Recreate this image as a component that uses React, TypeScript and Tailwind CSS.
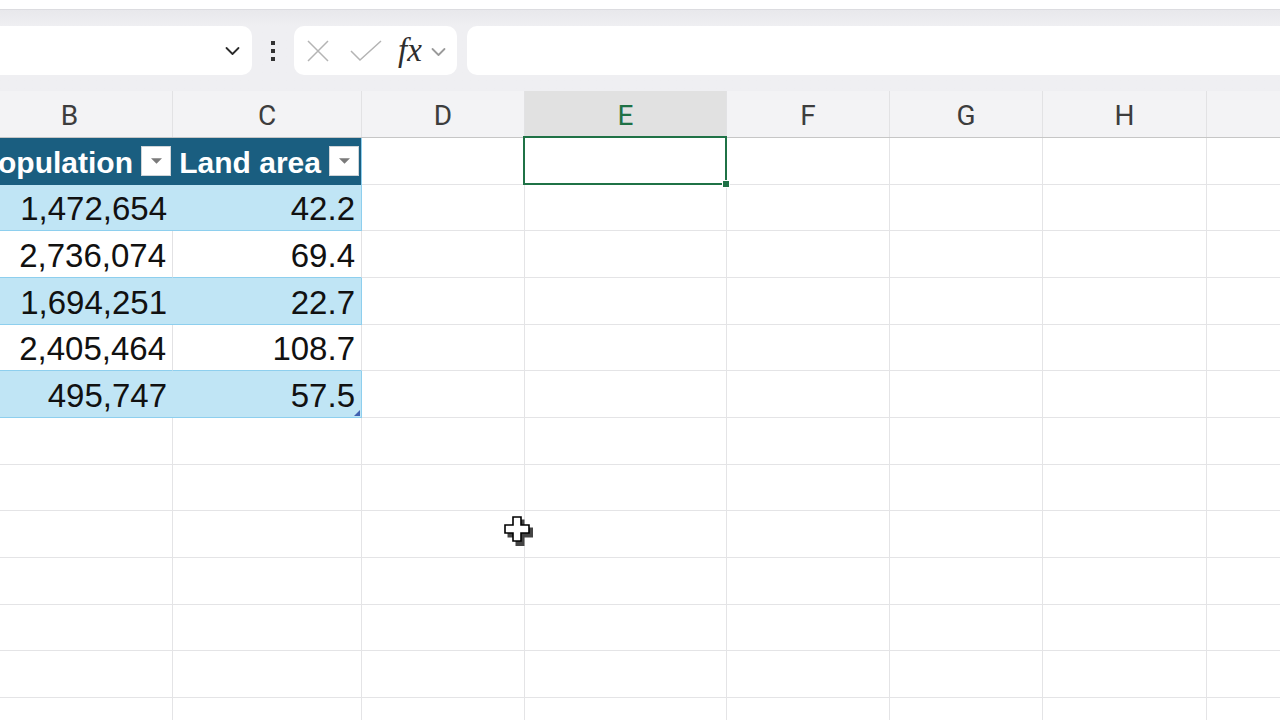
import React from 'react'

const cols = ['B', 'C', 'D', 'E', 'F', 'G', 'H', 'I']
const widths = ['w-[206px]', 'w-[189px]', 'w-[163px]', 'w-[202px]', 'w-[163px]', 'w-[153px]', 'w-[164px]', 'w-[120px]']

const data = [
  ['1,472,654', '42.2'],
  ['2,736,074', '69.4'],
  ['1,694,251', '22.7'],
  ['2,405,464', '108.7'],
  ['495,747', '57.5'],
]

function Chevron({ className }: { className: string }) {
  return (
    <svg viewBox="0 0 16 10" className={className} fill="none" stroke="currentColor" strokeWidth="1.8" strokeLinecap="round" strokeLinejoin="round">
      <path d="M2 2l6 6 6-6" />
    </svg>
  )
}

function FilterButton() {
  return (
    <div className="flex h-[30px] w-[30px] shrink-0 items-center justify-center border border-[#cfd4d8] bg-white">
      <svg viewBox="0 0 12 6" className="h-[6px] w-[11px]">
        <path d="M0 0h12L6 6z" fill="#7a7a7a" />
      </svg>
    </div>
  )
}

function Cursor() {
  return (
    <svg viewBox="0 0 30 31" className="absolute left-[503px] top-[515px] z-20 h-[31px] w-[30px]">
      <path d="M11 3h9v8h9v10h-9v9h-9v-9H3V11h8z" fill="#444" transform="translate(1.5 1.5)" />
      <path d="M10 2h8v8h8v8h-8v8h-8v-8H2v-8h8z" fill="#fff" stroke="#000" strokeWidth="1.6" />
    </svg>
  )
}

export default function App() {
  const rows = Array.from({ length: 13 })

  return (
    <div className="relative h-[720px] w-[1280px] overflow-hidden bg-white font-['Liberation_Sans',Arial,sans-serif]">
      {/* top strip */}
      <div className="h-[9px] bg-white" />

      {/* formula toolbar */}
      <div className="flex h-[82px] items-center border-t border-[#dcdce0] bg-gradient-to-b from-[#e8e8ec] from-[0%] to-[#efeff2] to-[20%]">
        <div className="flex h-[49px] w-[252px] shrink-0 items-center justify-end rounded-r-[10px] bg-white pr-[11px]">
          <Chevron className="h-[10px] w-[17px] text-[#2b2b2b]" />
        </div>
        <div className="flex w-[42px] shrink-0 flex-col items-center gap-[4px]">
          <div className="h-[4px] w-[4px] bg-[#333]" />
          <div className="h-[4px] w-[4px] bg-[#333]" />
          <div className="h-[4px] w-[4px] bg-[#333]" />
        </div>
        <div className="flex h-[49px] w-[163px] shrink-0 items-center rounded-[10px] bg-white pl-[12px]">
          <svg viewBox="0 0 24 24" className="h-[24px] w-[24px]" fill="none" stroke="#b4b4b4" strokeWidth="1.5">
            <path d="M2 2l20 20M22 2L2 22" />
          </svg>
          <svg viewBox="0 0 32 24" className="ml-[20px] h-[24px] w-[32px]" fill="none" stroke="#b4b4b4" strokeWidth="1.5">
            <path d="M1 12l9 9L31 2" />
          </svg>
          <span className="ml-[16px] font-['Liberation_Serif',serif] text-[33px] italic leading-none text-[#2e2e2e]">fx</span>
          <Chevron className="ml-[8px] mt-[2px] h-[10px] w-[17px] text-[#9a9a9a]" />
        </div>
        <div className="ml-[10px] h-[49px] flex-1 rounded-l-[10px] bg-white" />
      </div>

      {/* column headers */}
      <div className="-ml-[33px] flex h-[47px] border-b border-[#c6c6c6] bg-[#f3f3f5] font-['Roboto',sans-serif] text-[28px] text-[#3d3d3d]">
        {cols.map((c, i) => (
          <div
            key={c}
            className={`${widths[i]} flex shrink-0 items-center justify-center border-r border-[#e2e2e4] pt-[3px] ${
              c === 'E' ? 'bg-[#e1e1e1] text-[#1e7145]' : ''
            }`}
          >
            {c === 'I' ? '' : c}
          </div>
        ))}
      </div>

      {/* grid rows */}
      <div className="-ml-[33px]">
        {rows.map((_, r) => (
          <div key={r} className="flex h-[46.67px]">
            {cols.map((c, i) => {
              const inTable = r <= 5 && i <= 1
              if (inTable && r === 0) {
                return (
                  <div
                    key={c}
                    className={`${widths[i]} flex shrink-0 items-center justify-end gap-[8px] bg-[#1a5e80] pr-[2px] text-[30px] font-bold text-white ${
                      i === 1 ? 'border-r border-[#8ecfee]' : ''
                    }`}
                  >
                    <span className="whitespace-nowrap pt-[3px]">{i === 0 ? 'Population' : 'Land area'}</span>
                    <FilterButton />
                  </div>
                )
              }
              if (inTable) {
                const band = r % 2 === 1
                return (
                  <div
                    key={c}
                    className={`${widths[i]} relative flex shrink-0 items-center justify-end border-b border-[#8ecfee] pr-[6px] pt-[3px] text-[33px] text-[#111] ${
                      band ? 'bg-[#c0e5f5]' : 'border-r border-r-[#e2e2e4] bg-white'
                    } ${i === 1 ? 'border-r border-r-[#8ecfee]' : ''}`}
                  >
                    {data[r - 1][i]}
                    {r === 5 && i === 1 && (
                      <svg viewBox="0 0 6 6" className="absolute bottom-[1px] right-[1px] h-[6px] w-[6px]">
                        <path d="M6 0v6H0z" fill="#4060b0" />
                      </svg>
                    )}
                  </div>
                )
              }
              return (
                <div key={c} className={`${widths[i]} relative shrink-0 border-r border-b border-[#e4e4e6]`}>
                  {r === 0 && c === 'E' && (
                    <div className="absolute -left-[2px] -top-[2px] right-[-1px] -bottom-[1px] z-10 border-2 border-[#1f7246]">
                      <div className="absolute -bottom-[5px] -right-[5px] h-[8px] w-[8px] border border-white bg-[#1f7246]" />
                    </div>
                  )}
                </div>
              )
            })}
          </div>
        ))}
      </div>

      <Cursor />
    </div>
  )
}
